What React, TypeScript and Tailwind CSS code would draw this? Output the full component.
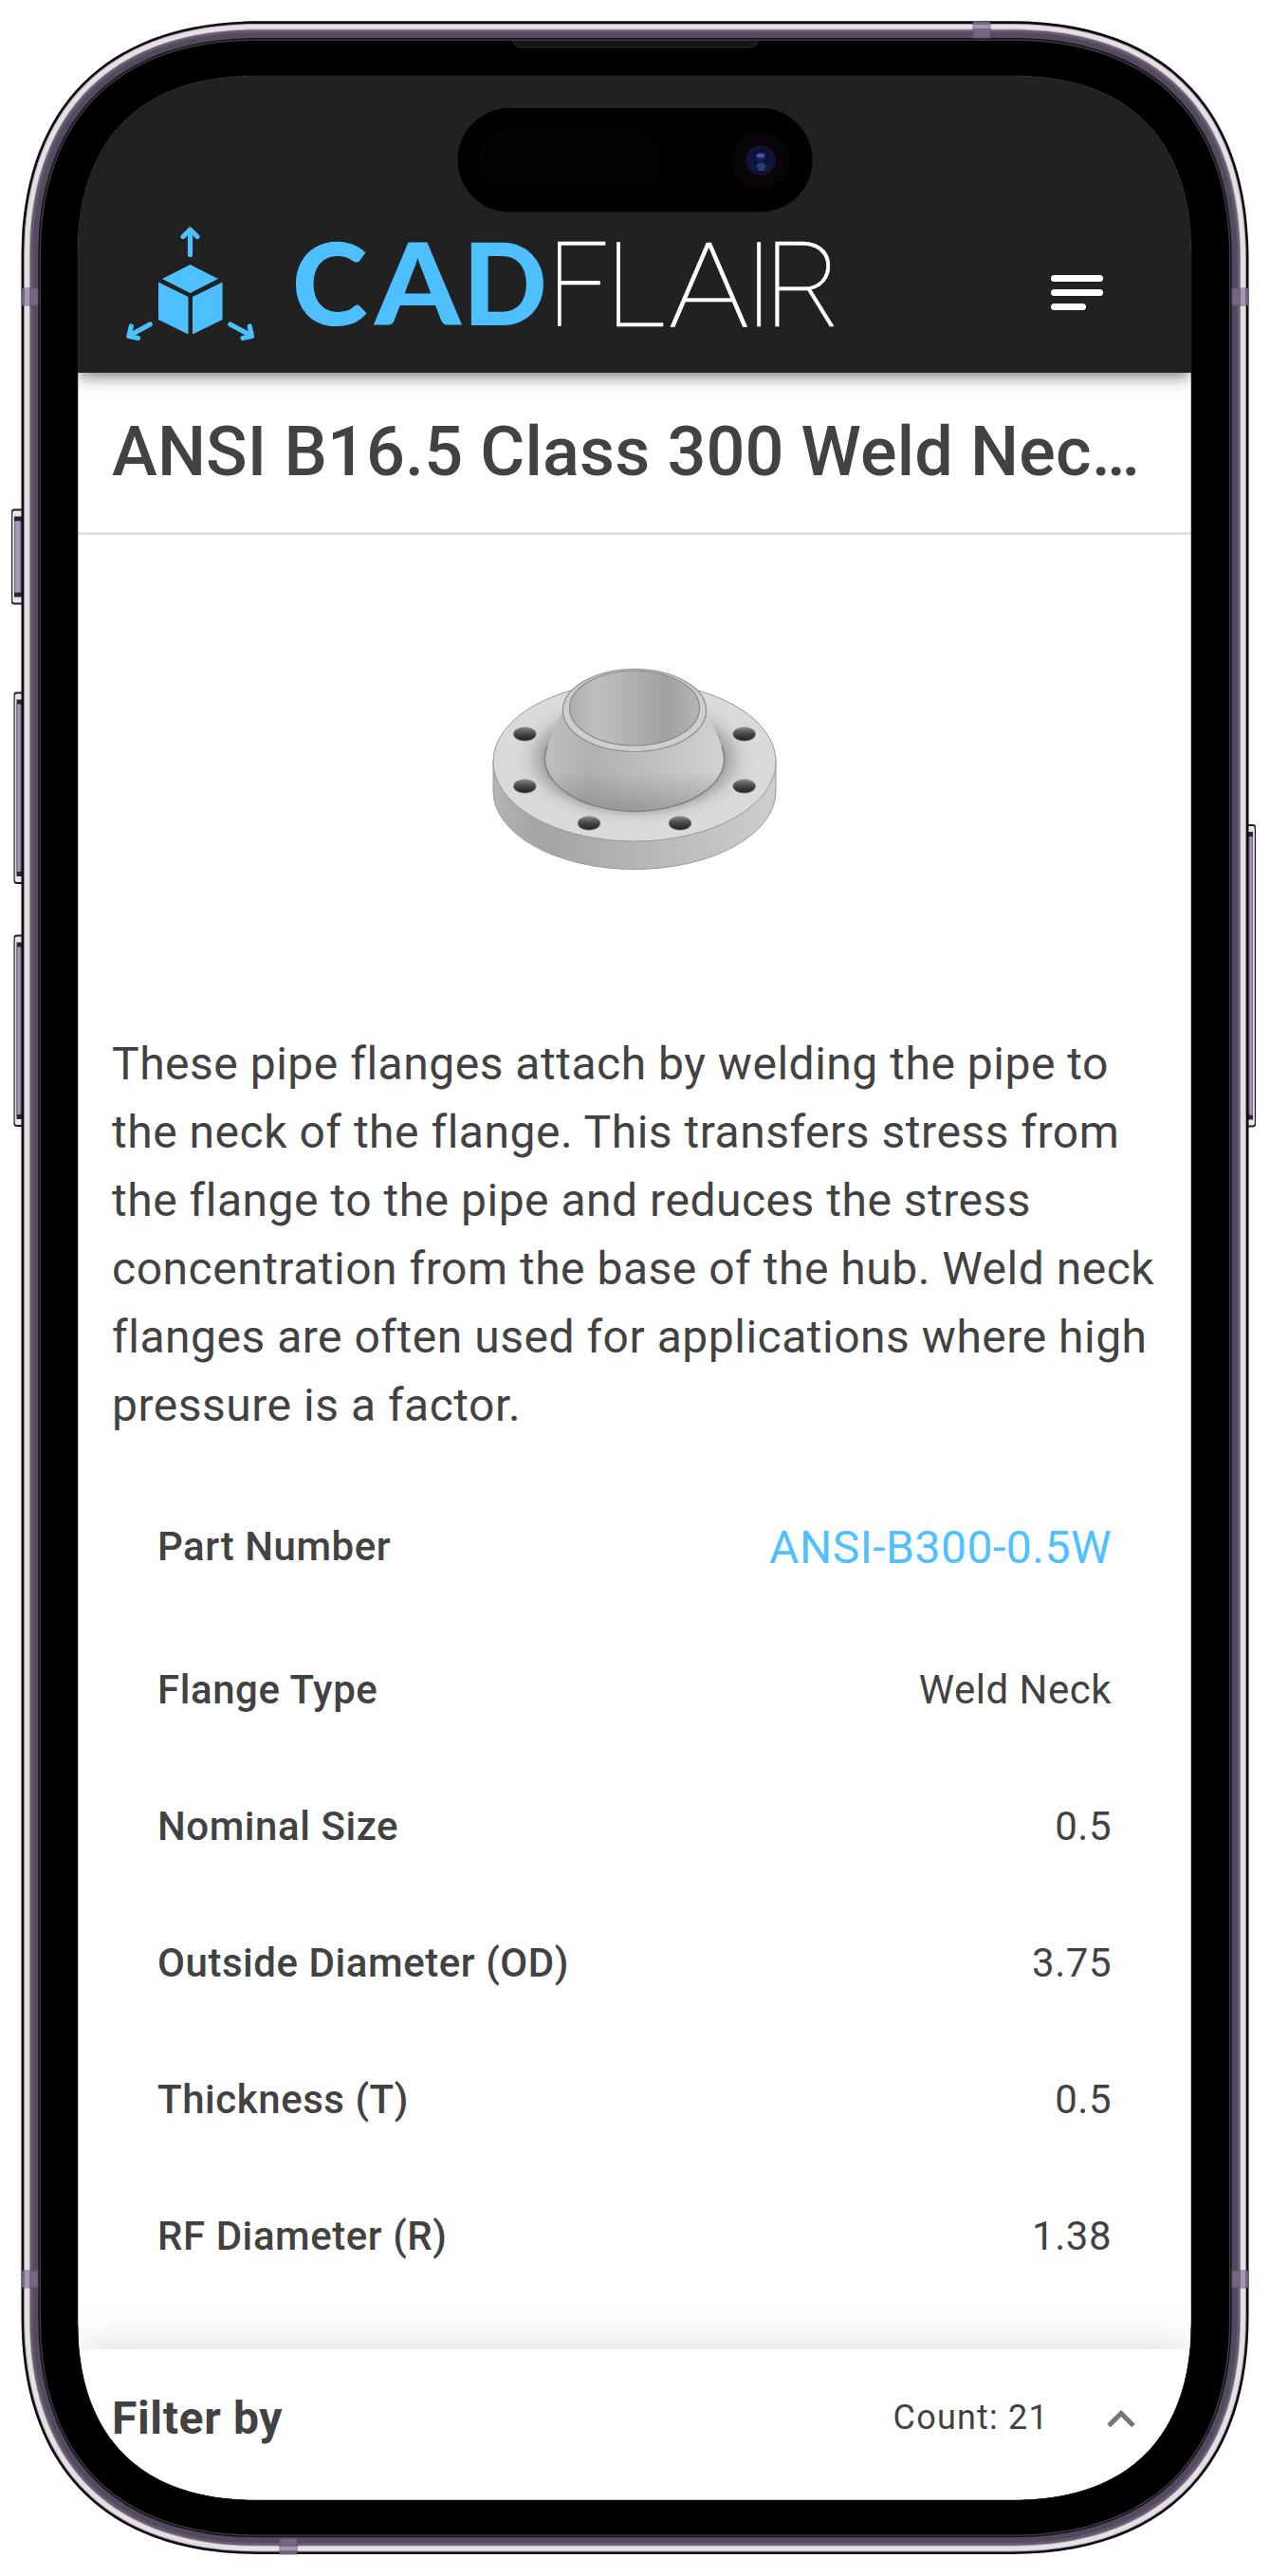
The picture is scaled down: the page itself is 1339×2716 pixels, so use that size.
import React from "react";

const ROWS: [string, string][] = [
  ["Flange Type", "Weld Neck"],
  ["Nominal Size", "0.5"],
  ["Outside Diameter (OD)", "3.75"],
  ["Thickness (T)", "0.5"],
  ["RF Diameter (R)", "1.38"],
];

// Continuous-corner rectangle; e is the length of the corner along each side.
function squircle(l: number, t: number, r: number, b: number, e: number) {
  const c = e * 0.36;
  return `M${l} ${t + e}C${l} ${t + c} ${l + c} ${t} ${l + e} ${t}H${r - e}C${r - c} ${t} ${r} ${t + c} ${r} ${t + e}V${b - e}C${r} ${b - c} ${r - c} ${b} ${r - e} ${b}H${l + e}C${l + c} ${b} ${l} ${b - c} ${l} ${b - e}Z`;
}

function ring(inset: number) {
  return squircle(22.5 + inset, 22.3 + inset, 1316.5 - inset, 2693 - inset, 250 - inset * 1.1);
}

const SCREEN = squircle(82, 80, 1256, 2636, 186);

function SideButton({ x, y, w, h, flip }: { x: number; y: number; w: number; h: number; flip?: boolean }) {
  return (
    <g transform={flip ? `translate(${2 * x + w} 0) scale(-1 1)` : undefined}>
      <rect x={x} y={y} width={w + 4} height={h} rx="3" fill="#231d2e" />
      <rect x={x + 1.2} y={y + 2} width={w + 2} height={h - 4} rx="2" fill="#e9e4ea" />
      <rect x={x + 3} y={y + 8} width={w} height={h - 16} fill="#2a2434" />
      <rect x={x + 3} y={y + 13} width={w} height={h - 26} fill="#766d84" />
      <rect x={x + 4.2} y={y + 13} width={w - 6} height={h - 26} fill="#a59bb4" />
    </g>
  );
}

function DeviceFrame() {
  return (
    <svg className="pointer-events-none absolute inset-0 z-20" width="1339" height="2716" viewBox="0 0 1339 2716">
      <defs>
        <radialGradient id="lens" cx=".5" cy=".4" r=".6">
          <stop offset="0" stopColor="#23296e" />
          <stop offset=".55" stopColor="#0a0b38" />
          <stop offset="1" stopColor="#1a1d55" />
        </radialGradient>
      </defs>
      <SideButton x={12} y={536.5} w={11} h={101} />
      <SideButton x={14.5} y={729.5} w={8.5} h={202.5} />
      <SideButton x={14.5} y={985.5} w={8.5} h={202.5} />
      <SideButton x={1316} y={869} w={8} h={319.5} flip />
      <path d={ring(0) + SCREEN} fillRule="evenodd" fill="#0d0816" />
      <path d={ring(2.6) + SCREEN} fillRule="evenodd" fill="#b49fa6" />
      <path d={ring(3.6) + SCREEN} fillRule="evenodd" fill="#e3e1e3" />
      <path d={ring(8.3) + SCREEN} fillRule="evenodd" fill="#b8a9a8" />
      <path d={ring(9.2) + SCREEN} fillRule="evenodd" fill="#675b73" />
      <path d={ring(12) + SCREEN} fillRule="evenodd" fill="#544a5f" />
      <path d={ring(17.8) + SCREEN} fillRule="evenodd" fill="#17101f" />
      <path d={ring(19.2) + SCREEN} fillRule="evenodd" fill="#3a3a3a" />
      <path d={ring(20.6) + SCREEN} fillRule="evenodd" fill="#000" />
      <g fill="#756781" stroke="#5b4f68" strokeWidth=".8">
        <rect x="23" y="304" width="17" height="18" />
        <rect x="1299" y="304" width="17" height="18" />
        <rect x="23" y="2394" width="17" height="18" />
        <rect x="1299" y="2394" width="17" height="18" />
        <rect x="1026" y="23" width="18" height="17" />
        <rect x="295" y="2676" width="18" height="17" />
      </g>
      <g fill="#a498b0">
        <rect x="26" y="304" width="5" height="18" />
        <rect x="1308" y="304" width="5" height="18" />
        <rect x="26" y="2394" width="5" height="18" />
        <rect x="1308" y="2394" width="5" height="18" />
        <rect x="1026" y="26" width="18" height="4" />
        <rect x="295" y="2685" width="18" height="4" />
      </g>
      <path d="M540.5 43H799c-1.500 4-3 6.800-6.500 6.800H548c-4 0-6-3-7.500-6.800Z" fill="#151515" />
      <path d="M540.5 43c1.500 3.800 3.500 6.800 7.500 6.800H792.500c3.500 0 5-2.800 6.500-6.800" fill="none" stroke="#383838" strokeWidth="1" />
      <path d={SCREEN} fill="none" stroke="#2c2c2c" strokeWidth=".6" />
      <rect x="482.500" y="114" width="374" height="109.500" rx="54.500" fill="#000" />
      <rect x="504" y="136" width="194" height="66" rx="33" fill="#030303" />
      <circle cx="802" cy="169" r="30" fill="#080408" />
      <circle cx="802" cy="169" r="16" fill="#12132c" />
      <circle cx="802" cy="168.500" r="12" fill="url(#lens)" />
      <ellipse cx="802" cy="164" rx="4.500" ry="2.200" fill="#4d56a0" />
      <ellipse cx="802.500" cy="175" rx="5" ry="3.500" fill="#134a60" />
      <ellipse cx="803" cy="178.500" rx="3.500" ry="1.500" fill="#5a2291" />
    </svg>
  );
}

function Logo() {
  return (
    <svg width="760" height="130" viewBox="130 230 760 130" className="block overflow-visible">
      <g fill="#4fc0ff">
        <path d="M200.500 279l29.500 15-29.500 15-29.500-15Z" />
        <path d="M167 297.500l31.500 15.500v39.500L167 337Z" />
        <path d="M234.500 297.500L203 313v39.500l31.500-15.500Z" />
      </g>
      <g fill="none" stroke="#4fc0ff" strokeWidth="5.200" strokeLinecap="round" strokeLinejoin="round">
        <path d="M200.500 268.500v-26M193 249.500l7.500-7.500 7.500 7.500" />
        <path d="M158.200 342L136 354M138.300 344L136 354.500l9.500 2" />
        <path d="M242.800 342L265 354M263.200 344l2.300 10.500-9.500 2" />
      </g>
      <g fontFamily="Lato" fontWeight="900" fontSize="121" fill="#4fc0ff">
        <text transform="translate(307.700 343)">C</text>
        <text transform="translate(395 343) scale(1.069 1)">A</text>
        <text transform="translate(488 343) scale(.965 1)">D</text>
      </g>
      <g fontFamily="Roboto" fontWeight="100" fontSize="124" fill="#fff" stroke="#fff" strokeWidth=".6">
        <text transform="translate(577.300 344) scale(.91 1)">F</text>
        <text transform="translate(638.300 344)">L</text>
        <text transform="translate(704.700 344) scale(1.15 1)">A</text>
        <text transform="translate(784 344)">I</text>
        <text transform="translate(806 344)">R</text>
      </g>
    </svg>
  );
}

function Flange() {
  const holes = [[553.3, 774], [553.3, 829], [784.7, 774], [784.7, 829], [621, 868], [717, 868]];
  return (
    <svg width="360" height="260" viewBox="490 680 360 260" className="ml-[2px] block">
      <defs>
        <linearGradient id="side"><stop offset="0" stopColor="#b4b4b4" /><stop offset=".18" stopColor="#a4a4a4" /><stop offset=".5" stopColor="#b5b5b5" /><stop offset="1" stopColor="#cecece" /></linearGradient>
        <linearGradient id="hub"><stop offset="0" stopColor="#c0c0c0" /><stop offset=".25" stopColor="#b0b0b0" /><stop offset=".6" stopColor="#c0c0c0" /><stop offset="1" stopColor="#d2d2d2" /></linearGradient>
        <linearGradient id="bore"><stop offset="0" stopColor="#acacac" /><stop offset=".2" stopColor="#bfbfbf" /><stop offset=".75" stopColor="#a1a1a1" /><stop offset="1" stopColor="#b5b5b5" /></linearGradient>
        <linearGradient id="hole" x2="0" y2="1"><stop offset="0" stopColor="#858585" /><stop offset=".5" stopColor="#464646" /><stop offset="1" stopColor="#202020" /></linearGradient>
        <linearGradient id="shade" x2="0" y2="1"><stop offset=".6" stopColor="#777" stopOpacity="0" /><stop offset="1" stopColor="#777" stopOpacity=".5" /></linearGradient>
        <radialGradient id="top"><stop offset=".7" stopColor="#858585" /><stop offset=".77" stopColor="#aeaeae" /><stop offset=".88" stopColor="#d0d0d0" /><stop offset="1" stopColor="#dadada" /></radialGradient>
      </defs>
      <path d="M520 802v32a149 82.500 0 0 0 298 0v-32Z" fill="url(#side)" stroke="#999" />
      <ellipse cx="669" cy="803" rx="149" ry="84" fill="#dadada" />
      <ellipse cx="669" cy="800" rx="128" ry="70" fill="url(#top)" />
      <ellipse cx="669" cy="803" rx="149" ry="84" fill="none" stroke="#999" />
      <path d="M594 748c-7 16-19 37-19 54 0 29 42 53.500 94.500 53.500S763 831 763 802c0-17-12-38-19-54Z" fill="url(#hub)" />
      <path d="M594 748c-7 16-19 37-19 54 0 29 42 53.500 94.500 53.500S763 831 763 802c0-17-12-38-19-54Z" fill="url(#shade)" />
      <path d="M577 787c-14 35 32 68.500 92.500 68.500S775 822 761 787" fill="none" stroke="#808080" strokeWidth="1.300" />
      <ellipse cx="669" cy="749" rx="75.500" ry="43.500" fill="#cecece" stroke="#8d8d8d" strokeWidth="1.200" />
      <ellipse cx="669" cy="746.500" rx="68.500" ry="39.500" fill="url(#bore)" stroke="#8a8a8a" strokeWidth="1.200" />
      {holes.map(([x, y], i) => (
        <ellipse key={i} cx={x} cy={y} rx="12" ry="7.300" fill="url(#hole)" stroke="#999" strokeWidth=".7" />
      ))}
    </svg>
  );
}

export default function App() {
  return (
    <div className="relative h-[2716px] w-[1339px] overflow-hidden bg-white pt-[80px] pl-[82px] font-['Roboto',sans-serif] text-[#424242]">
      <div className="flex h-[2556px] w-[1174px] flex-col overflow-hidden rounded-[140px] bg-white">
        <header className="z-10 flex h-[312.500px] shrink-0 items-end justify-between bg-[#212121] pr-[93px] pb-[32.500px] pl-[48px] shadow-[0_6px_12px_-3px_rgba(0,0,0,0.4),0_12px_15px_0_rgba(0,0,0,0.12)]">
          <Logo />
          <div className="mb-[33px] flex w-[55px] flex-col gap-[8px]">
            <span className="h-[7px] rounded-full bg-white" />
            <span className="h-[7px] rounded-full bg-white" />
            <span className="h-[7px] w-[37px] rounded-full bg-white" />
          </div>
        </header>
        <h1 className="h-[171.500px] shrink-0 truncate border-b-3 border-[#e0e0e0] px-[36px] pt-[26px] text-[72px] leading-[115px] font-medium tracking-[0.140px]">
          ANSI B16.5 Class 300 Weld Neck Flanges
        </h1>
        <div className="flex h-[522px] shrink-0 justify-center pt-[116px]">
          <Flange />
        </div>
        <p className="shrink-0 px-[36px] text-[48px] leading-[72px] tracking-[0.510px] whitespace-nowrap">
          These pipe flanges attach by welding the pipe to<br />
          the neck of the flange. This transfers stress from<br />
          the flange to the pipe and reduces the stress<br />
          concentration from the base of the hub. Weld neck<br />
          flanges are often used for applications where high<br />
          pressure is a factor.
        </p>
        <dl className="flex-1 px-[84px] pt-[34.600px] text-[42px]">
          <div className="flex h-[156.400px] items-center justify-between">
            <dt className="font-medium tracking-[0.530px]">Part Number</dt>
            <dd className="pt-[2px] text-[48px] tracking-[0.520px] text-[#50c0ff]">ANSI-B300-0.5W</dd>
          </div>
          {ROWS.map(([label, value]) => (
            <div key={label} className="flex h-[144.200px] items-center justify-between">
              <dt className="font-medium tracking-[0.550px]">{label}</dt>
              <dd className="tracking-[0.500px]">{value}</dd>
            </div>
          ))}
        </dl>
        <footer className="z-10 flex h-[159.500px] shrink-0 items-center rounded-t-[12px] bg-white pr-[59px] pb-[12px] pl-[36px] shadow-[0_-3px_45px_0_rgba(0,0,0,0.14)]">
          <span className="flex-1 text-[48px] font-bold tracking-[0.650px]">Filter by</span>
          <span className="pb-[2px] text-[36px] tracking-[1.200px]">Count: 21</span>
          <svg width="30" height="20" viewBox="0 0 30 20" className="ml-[61px]">
            <path d="M2 17.500L15 4.500L28 17.500" fill="none" stroke="#757575" strokeWidth="5" />
          </svg>
        </footer>
      </div>
      <DeviceFrame />
    </div>
  );
}
